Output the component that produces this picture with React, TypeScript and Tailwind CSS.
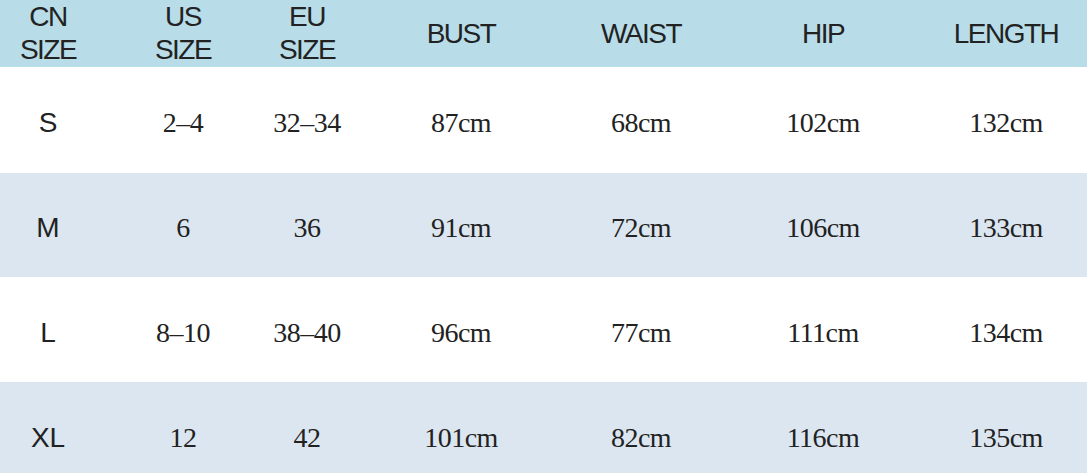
const headers = [["CN", "SIZE"], ["US", "SIZE"], ["EU", "SIZE"], ["BUST"], ["WAIST"], ["HIP"], ["LENGTH"]];

const rows = [
  { size: "S", cells: ["2-4", "32-34", "87cm", "68cm", "102cm", "132cm"], bg: "bg-white", h: "h-[106px]" },
  { size: "M", cells: ["6", "36", "91cm", "72cm", "106cm", "133cm"], bg: "bg-[#dce6f0]", h: "h-[104px]" },
  { size: "L", cells: ["8-10", "38-40", "96cm", "77cm", "111cm", "134cm"], bg: "bg-white", h: "h-[105px]" },
  { size: "XL", cells: ["12", "42", "101cm", "82cm", "116cm", "135cm"], bg: "bg-[#dce6f0]", h: "h-[105px]" },
];

// column centres follow the picture: 48, 183, 307, 461, 641, 823, 1006
const cols = "grid grid-cols-[96px_174px_74px_234px_126px_238px_128px_17px]";

export default function App() {
  return (
    <div className="w-[1087px] h-[473px] overflow-hidden bg-white text-[#222]">
      <div className={`${cols} h-[67px] pb-[10px] bg-[#b8dde9] font-['Liberation_Sans',Arial,sans-serif] text-[28px] tracking-[-1.5px] leading-[33px]`}>
        {headers.map((lines, i) => (
          <div key={i} className="flex flex-col items-center justify-center text-center whitespace-nowrap">
            {lines.map((l) => (
              <span key={l}>{l}</span>
            ))}
          </div>
        ))}
      </div>
      {rows.map((r) => (
        <div key={r.size} className={`${cols} ${r.h} ${r.bg} pt-[6px] items-center`}>
          <div className="text-center font-['Liberation_Sans',Arial,sans-serif] text-[28px]">{r.size}</div>
          {r.cells.map((c, i) => (
            <div key={i} className="text-center whitespace-nowrap font-['Liberation_Serif','Times_New_Roman',serif] text-[28px] tracking-[-0.5px]">
              {c.replace("-", "\u2013")}
            </div>
          ))}
        </div>
      ))}
    </div>
  );
}
